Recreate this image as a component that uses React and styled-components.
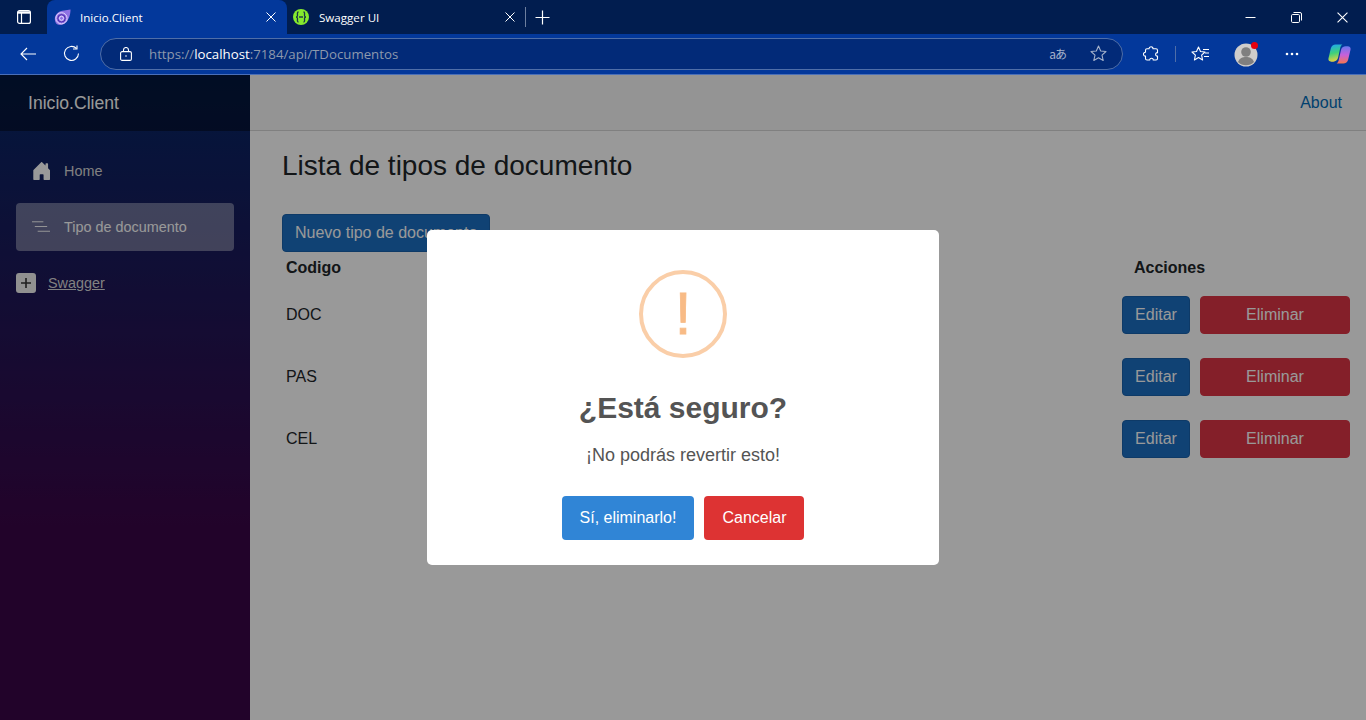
import styled, { createGlobalStyle } from "styled-components";

const GlobalStyle = createGlobalStyle`
    html, body {
        margin: 0;
        padding: 0;
        height: 100%;
        overflow: hidden;
    }
    body {
        font-family: "Liberation Sans", Arial, sans-serif;
        background: #fff;
    }
    * {
        box-sizing: border-box;
    }
`;

const Screen = styled.div`
    display: flex;
    flex-direction: column;
    width: 100%;
    height: 720px;
`;

/* browser chrome */
const TabBar = styled.div`
    display: flex;
    align-items: stretch;
    height: 34px;
    background: #011d4f;
    color: #fff;
    font-family: "Open Sans", sans-serif;
    font-size: 11.6px;
`;

const TabLayoutButton = styled.div`
    display: flex;
    align-items: center;
    justify-content: center;
    width: 47px;
`;

const Tab = styled.div`
    display: flex;
    align-items: center;
    width: ${(p) => p.$width}px;
    padding: 0 ${(p) => (p.$active ? 11 : 3)}px 0 ${(p) => (p.$active ? 7 : 6)}px;
    background: ${(p) => (p.$active ? "#03389b" : "transparent")};
    border-radius: 8px 8px 0 0;
`;

const TabTitle = styled.span`
    flex: 1;
    margin-left: ${(p) => (p.$active ? 9 : 10)}px;
    white-space: nowrap;
`;

const TabDivider = styled.div`
    width: 1px;
    height: 20px;
    margin: 7px 9px 0 7px;
    background: #6d7f9f;
`;

const NewTab = styled.div`
    display: flex;
    align-items: center;
`;

const WindowControls = styled.div`
    display: flex;
    align-items: center;
    gap: 35px;
    margin-left: auto;
    padding-right: 18px;
`;

const ToolBar = styled.div`
    display: flex;
    align-items: center;
    height: 41px;
    padding: 0 15px 1px 20px;
    background: #03389b;
    border-bottom: 1px solid #4a6fb8;
`;

const NavIcons = styled.div`
    display: flex;
    align-items: center;
    gap: 27px;
    margin-right: 20px;
`;

const AddressBar = styled.div`
    display: flex;
    align-items: center;
    flex: 1;
    height: 32px;
    padding: 0 15px 0 19px;
    background: #022a78;
    border: 1px solid #4f6ea8;
    border-radius: 16px;
    font-family: "Open Sans", sans-serif;
    font-size: 13.25px;
`;

const Url = styled.span`
    flex: 1;
    margin-left: 17px;
    color: #8d99ad;
    white-space: nowrap;
`;

const UrlHost = styled.span`
    color: #fff;
`;

const AddressIcons = styled.div`
    display: flex;
    align-items: center;
    gap: 24px;
`;

const TranslateGlyph = styled.span`
    color: #a5b2cb;
    font-family: "Noto Sans CJK JP", "Open Sans", sans-serif;
    font-size: 12px;
    letter-spacing: -1px;
`;

const ToolIcons = styled.div`
    display: flex;
    align-items: center;
    margin-left: 20px;
`;

const ToolSlot = styled.div`
    display: flex;
    align-items: center;
    justify-content: center;
    width: ${(p) => p.$width}px;
    margin-left: ${(p) => p.$gap || 0}px;
`;

const ToolDivider = styled.div`
    width: 1px;
    height: 16px;
    margin: 0 11px 0 16px;
    background: #4f6ea8;
`;

/* blazor app */
const AppArea = styled.div`
    position: relative;
    display: flex;
    flex: 1;
    min-height: 0;
`;

const Sidebar = styled.aside`
    width: 250px;
    background-image: linear-gradient(180deg, #052767 0%, #3a0647 70%);
`;

const Brand = styled.div`
    display: flex;
    align-items: center;
    height: 56px;
    padding-left: 28px;
    background: rgba(0, 0, 0, 0.4);
    color: #fff;
    font-size: 17.6px;
`;

const SideNav = styled.nav`
    display: flex;
    flex-direction: column;
    gap: 8px;
    padding: 16px 16px 0;
`;

const NavItem = styled.a`
    display: flex;
    align-items: center;
    height: 48px;
    padding-left: 16px;
    gap: 14px;
    border-radius: 4px;
    background: ${(p) => (p.$active ? "rgba(255, 255, 255, 0.37)" : "transparent")};
    color: ${(p) => (p.$active ? "#fff" : "#d7d7d7")};
    font-size: 14.4px;
`;

const SwaggerLink = styled.a`
    display: flex;
    align-items: center;
    gap: 12px;
    margin-top: 14px;
    color: #d7d7d7;
    font-size: 14.4px;
    text-decoration: underline;
`;

const PlusBox = styled.span`
    display: flex;
    align-items: center;
    justify-content: center;
    width: 20px;
    height: 20px;
    background: #f0f0f0;
    border-radius: 3px;
`;

const Main = styled.main`
    flex: 1;
    min-width: 0;
    background: #fff;
`;

const TopRow = styled.div`
    display: flex;
    align-items: center;
    justify-content: flex-end;
    height: 56px;
    padding-right: 24px;
    background: #f7f7f7;
    border-bottom: 1px solid #d6d5d5;
`;

const AboutLink = styled.a`
    color: #006bb7;
    font-size: 16px;
`;

const Content = styled.article`
    padding: 18px 16px 0 32px;
    color: #212529;
`;

const PageTitle = styled.h1`
    margin: 0 0 31px;
    font-size: 28px;
    font-weight: 400;
    line-height: 34px;
`;

const Button = styled.button`
    height: 38px;
    width: ${(p) => (p.$width ? `${p.$width}px` : "auto")};
    padding: 0 ${(p) => (p.$width ? 0 : 12)}px;
    border: 1px solid ${(p) => (p.$danger ? "#dc3545" : "#1861ac")};
    border-radius: 4px;
    background: ${(p) => (p.$danger ? "#dc3545" : "#1b6ec2")};
    color: #fff;
    font-family: inherit;
    font-size: 16px;
`;

const TableHead = styled.div`
    display: grid;
    grid-template-columns: 1fr 228px;
    align-items: center;
    height: 31px;
    font-weight: 700;
    font-size: 16px;
`;

const CodeHead = styled.span`
    padding-left: 4px;
`;

const ActionHead = styled.span`
    padding-left: 12px;
`;

const TableRow = styled.div`
    display: grid;
    grid-template-columns: 1fr 228px;
    align-items: center;
    height: 62px;
    padding: 13px 0 11px;
    font-size: 16px;
`;

const Code = styled.span`
    padding-left: 4px;
`;

const Actions = styled.div`
    display: flex;
    gap: 10px;
`;

/* sweetalert */
const Overlay = styled.div`
    position: absolute;
    inset: 0;
    display: flex;
    align-items: center;
    justify-content: center;
    background: rgba(0, 0, 0, 0.4);
`;

const Modal = styled.div`
    display: flex;
    flex-direction: column;
    align-items: center;
    width: 512px;
    height: 335px;
    padding-top: 40px;
    background: #fff;
    border-radius: 5px;
`;

const WarnIcon = styled.div`
    display: flex;
    align-items: center;
    justify-content: center;
    width: 88px;
    height: 88px;
    border: 4px solid #facea8;
    border-radius: 50%;
    color: #f8bb86;
    font-size: 60px;
    line-height: 1;
    -webkit-text-stroke: 0.8px #f8bb86;
`;

const ModalTitle = styled.h2`
    margin: 32px 0 0;
    color: #545454;
    font-size: 30px;
    font-weight: 700;
    line-height: 36px;
`;

const ModalText = styled.p`
    margin: 18px 0 0;
    color: #545454;
    font-size: 18px;
    line-height: 22px;
`;

const ModalButtons = styled.div`
    display: flex;
    gap: 10px;
    margin-top: 30px;
`;

const ModalButton = styled.button`
    height: 44px;
    padding: 0 18px;
    border: 0;
    border-radius: 4px;
    background: ${(p) => p.$color};
    color: #fff;
    font-family: inherit;
    font-size: 16px;
`;

const ROWS = ["DOC", "PAS", "CEL"];

const CloseIcon = ({ size = 10 }) => (
    <svg width={size} height={size} viewBox="0 0 10 10" fill="none" stroke="#fff" strokeWidth="1">
        <path d="M.5.5l9 9M9.5.5l-9 9" />
    </svg>
);

const LayoutIcon = () => (
    <svg width="14" height="14" viewBox="0 0 14 14" fill="none" stroke="#fff">
        <rect x=".6" y=".6" width="12.8" height="12.8" rx="2" strokeWidth="1.2" />
        <path d="M1 2.5h12" strokeWidth="2.4" />
        <path d="M4.5 3v10" strokeWidth="1.2" />
    </svg>
);

const BlazorIcon = () => (
    <svg width="17" height="17" viewBox="0 0 17 17" fill="none">
        <path d="M.8 10C.8 5 5 2 10 1.500L16.500 .5C16.500 4 15.800 9 12.500 13C9 16.500 4 16.800 2 14.300C1.200 13 .8 11.500 .8 10Z" fill="#8f72e4" />
        <circle cx="7.500" cy="9.300" r="5.600" stroke="#e6dcff" strokeWidth="1" />
        <circle cx="7.500" cy="9.300" r="3.700" stroke="#4d2aa8" strokeWidth="1" />
        <circle cx="7.500" cy="9.300" r="2" stroke="#e6dcff" strokeWidth="1" />
    </svg>
);

const SwaggerIcon = () => (
    <svg width="16" height="16" viewBox="0 0 16 16" fill="none">
        <circle cx="8" cy="8" r="8" fill="#85ea2d" />
        <path d="M5.500 3C4 3 4.500 5 4.500 6.500C4.500 7.500 3.800 8 3 8C3.800 8 4.500 8.500 4.500 9.500C4.500 11 4 13 5.500 13M10.500 3C12 3 11.500 5 11.500 6.500C11.500 7.500 12.200 8 13 8C12.200 8 11.500 8.500 11.500 9.500C11.500 11 12 13 10.500 13" stroke="#173647" strokeWidth="1.300" />
        <path d="M6 8h4" stroke="#173647" strokeWidth="1.400" />
    </svg>
);

const PlusIcon = () => (
    <svg width="15" height="15" viewBox="0 0 15 15" stroke="#fff" strokeWidth="1.200">
        <path d="M7.500.5v14M.5 7.500h14" />
    </svg>
);

const MinimizeIcon = () => (
    <svg width="11" height="11" viewBox="0 0 11 11" stroke="#fff">
        <path d="M.5 5.500h10" />
    </svg>
);

const RestoreIcon = () => (
    <svg width="11" height="11" viewBox="0 0 11 11" fill="none" stroke="#fff">
        <rect x=".5" y="2.500" width="8" height="8" rx="1.200" />
        <path d="M2.500.5h6.500a1.500 1.500 0 0 1 1.500 1.500v6.500" />
    </svg>
);

const BackIcon = () => (
    <svg width="16" height="14" viewBox="0 0 16 14" fill="none" stroke="#fff" strokeWidth="1.100">
        <path d="M16 7H1M7 1L1 7l6 6" />
    </svg>
);

const RefreshIcon = () => (
    <svg width="17" height="17" viewBox="0 0 17 17" fill="none" stroke="#fff" strokeWidth="1.100">
        <path d="M13.500 3.500A7 7 0 1 0 15.500 8.500" />
        <path d="M14 .5v3.500h-4" />
    </svg>
);

const LockIcon = () => (
    <svg width="12" height="14" viewBox="0 0 12 14" fill="none" stroke="#fff" strokeWidth="1.100">
        <rect x=".6" y="4.600" width="10.800" height="8.800" rx="1.500" />
        <path d="M3.500 4.500V3a2.500 2.500 0 0 1 5 0v1.500" />
        <circle cx="6" cy="9" r=".8" fill="#fff" stroke="none" />
    </svg>
);

const StarIcon = ({ color = "#a5b2cb" }) => (
    <svg width="17" height="17" viewBox="0 0 17 17" fill="none" stroke={color} strokeWidth="1.100">
        <path d="M8.500 1l2.200 5 5.300.5-4 3.600 1.200 5.400-4.700-2.800-4.700 2.800 1.200-5.400-4-3.600 5.300-.5z" strokeLinejoin="round" />
    </svg>
);

const PuzzleIcon = () => (
    <svg width="16" height="16" viewBox="0 0 16 16" fill="none" stroke="#fff" strokeWidth="1.100">
        <path d="M6 2.800C6 .4 10-.1 10 2.800h3c1 0 1.500.5 1.500 1.500v2.400c-2.500-.4-2.500 3.800 0 3.400v2.400c0 1-.5 1.500-1.500 1.500h-2.800c.3-2.400-3.700-2.400-3.400 0H4c-1 0-1.500-.5-1.500-1.500V10C-.2 10.300-.2 6 2.500 6.300V4.300c0-1 .5-1.500 1.500-1.500z" strokeLinejoin="round" />
    </svg>
);

const FavoritesIcon = () => (
    <svg width="19" height="16" viewBox="0 0 19 16" fill="none" stroke="#fff" strokeWidth="1.100">
        <path d="M7.500 1l2 4.500 4.500.5-3.400 3.200 1 4.800-4.100-2.500L3.400 14l1-4.800L1 6l4.500-.5z" strokeLinejoin="round" />
        <path d="M12 3.500h6M14 7h4M13 10.500h5" />
    </svg>
);

const ProfileIcon = () => (
    <svg width="26" height="26" viewBox="0 0 26 26">
        <circle cx="12" cy="14" r="11.500" fill="#cfcdcb" />
        <circle cx="12" cy="11" r="4.800" fill="#7f7f7f" />
        <path d="M4 21c1.500-4 4.500-5 8-5s6.500 1 8 5a11.500 11.500 0 0 1-16 0z" fill="#7f7f7f" />
        <circle cx="20.500" cy="4.500" r="3.500" fill="#e8000d" />
    </svg>
);

const DotsIcon = () => (
    <svg width="14" height="4" viewBox="0 0 14 4" fill="#fff">
        <circle cx="2" cy="2" r="1.300" />
        <circle cx="7" cy="2" r="1.300" />
        <circle cx="12" cy="2" r="1.300" />
    </svg>
);

const CopilotIcon = () => (
    <svg width="23" height="22" viewBox="0 0 24 22">
        <defs>
            <linearGradient id="copA" x1="0.300" y1="0" x2="0.500" y2="1">
                <stop offset="0" stopColor="#1fa8ec" />
                <stop offset="0.500" stopColor="#3fd07a" />
                <stop offset="1" stopColor="#f4d23c" />
            </linearGradient>
            <linearGradient id="copB" x1="0.500" y1="0" x2="0.500" y2="1">
                <stop offset="0" stopColor="#6a78ee" />
                <stop offset="0.500" stopColor="#c660dc" />
                <stop offset="1" stopColor="#f6764e" />
            </linearGradient>
        </defs>
        <path d="M8 1h7c-1.500 1-2 2.500-2.300 4L10.500 15c-.5 2.500-2.500 4-5 4H3.500C1.200 19 0 17.500 .5 15.500L3 5C3.600 2.500 5.500 1 8 1z" fill="url(#copA)" />
        <path d="M16 21H9c1.500-1 2-2.500 2.300-4L13.500 7c.5-2.500 2.500-4 5-4h2c2.300 0 3.500 1.500 3 3.500L21 17c-.6 2.500-2.500 4-5 4z" fill="url(#copB)" />
    </svg>
);

const HomeIcon = () => (
    <svg width="18" height="18" viewBox="0.500 1 14 14" fill="#fff">
        <path d="M6.500 14.500v-3.505c0-.245.25-.495.500-.495h2c.250 0 .500.250.500.500v3.500a.500.500 0 0 0 .500.500h4a.500.500 0 0 0 .500-.500v-7a.500.500 0 0 0-.146-.354L13 5.793V2.500a.500.500 0 0 0-.500-.500h-1a.500.500 0 0 0-.500.500v1.293L8.354 1.146a.500.500 0 0 0-.708 0l-6 6A.500.500 0 0 0 1.500 7.500v7a.500.500 0 0 0 .500.500h4a.500.500 0 0 0 .500-.500z" />
    </svg>
);

const ListIcon = () => (
    <svg width="18" height="12" viewBox="0 0 19 12" stroke="#fff">
        <path d="M0 .5h12M3 5.500h13M6 10.500h13" />
    </svg>
);

const SmallPlusIcon = () => (
    <svg width="10" height="10" viewBox="0 0 10 10" stroke="#333" strokeWidth="1.600">
        <path d="M5 0v10M0 5h10" />
    </svg>
);

function App() {
    return (
        <Screen>
            <GlobalStyle />
            <TabBar>
                <TabLayoutButton><LayoutIcon /></TabLayoutButton>
                <Tab $active $width={240}>
                    <BlazorIcon />
                    <TabTitle $active>Inicio.Client</TabTitle>
                    <CloseIcon />
                </Tab>
                <Tab $width={231}>
                    <SwaggerIcon />
                    <TabTitle>Swagger UI</TabTitle>
                    <CloseIcon />
                </Tab>
                <TabDivider />
                <NewTab><PlusIcon /></NewTab>
                <WindowControls>
                    <MinimizeIcon />
                    <RestoreIcon />
                    <CloseIcon size={11} />
                </WindowControls>
            </TabBar>
            <ToolBar>
                <NavIcons>
                    <BackIcon />
                    <RefreshIcon />
                </NavIcons>
                <AddressBar>
                    <LockIcon />
                    <Url>https://<UrlHost>localhost</UrlHost>:7184/api/TDocumentos</Url>
                    <AddressIcons>
                        <TranslateGlyph>aあ</TranslateGlyph>
                        <StarIcon />
                    </AddressIcons>
                </AddressBar>
                <ToolIcons>
                    <PuzzleIcon />
                    <ToolDivider />
                    <ToolSlot $width={26}><FavoritesIcon /></ToolSlot>
                    <ToolSlot $width={68}><ProfileIcon /></ToolSlot>
                    <ToolSlot $width={22}><DotsIcon /></ToolSlot>
                    <ToolSlot $width={24} $gap={24}><CopilotIcon /></ToolSlot>
                </ToolIcons>
            </ToolBar>
            <AppArea>
                <Sidebar>
                    <Brand>Inicio.Client</Brand>
                    <SideNav>
                        <NavItem><HomeIcon />Home</NavItem>
                        <NavItem $active><ListIcon />Tipo de documento</NavItem>
                        <SwaggerLink>
                            <PlusBox><SmallPlusIcon /></PlusBox>
                            Swagger
                        </SwaggerLink>
                    </SideNav>
                </Sidebar>
                <Main>
                    <TopRow>
                        <AboutLink>About</AboutLink>
                    </TopRow>
                    <Content>
                        <PageTitle>Lista de tipos de documento</PageTitle>
                        <Button>Nuevo tipo de documento</Button>
                        <TableHead>
                            <CodeHead>Codigo</CodeHead>
                            <ActionHead>Acciones</ActionHead>
                        </TableHead>
                        {ROWS.map((code) => (
                            <TableRow key={code}>
                                <Code>{code}</Code>
                                <Actions>
                                    <Button $width={68}>Editar</Button>
                                    <Button $danger $width={150}>Eliminar</Button>
                                </Actions>
                            </TableRow>
                        ))}
                    </Content>
                </Main>
                <Overlay>
                    <Modal>
                        <WarnIcon>!</WarnIcon>
                        <ModalTitle>¿Está seguro?</ModalTitle>
                        <ModalText>¡No podrás revertir esto!</ModalText>
                        <ModalButtons>
                            <ModalButton $color="#3085d6">Sí, eliminarlo!</ModalButton>
                            <ModalButton $color="#dd3333">Cancelar</ModalButton>
                        </ModalButtons>
                    </Modal>
                </Overlay>
            </AppArea>
        </Screen>
    );
}

export default App;
